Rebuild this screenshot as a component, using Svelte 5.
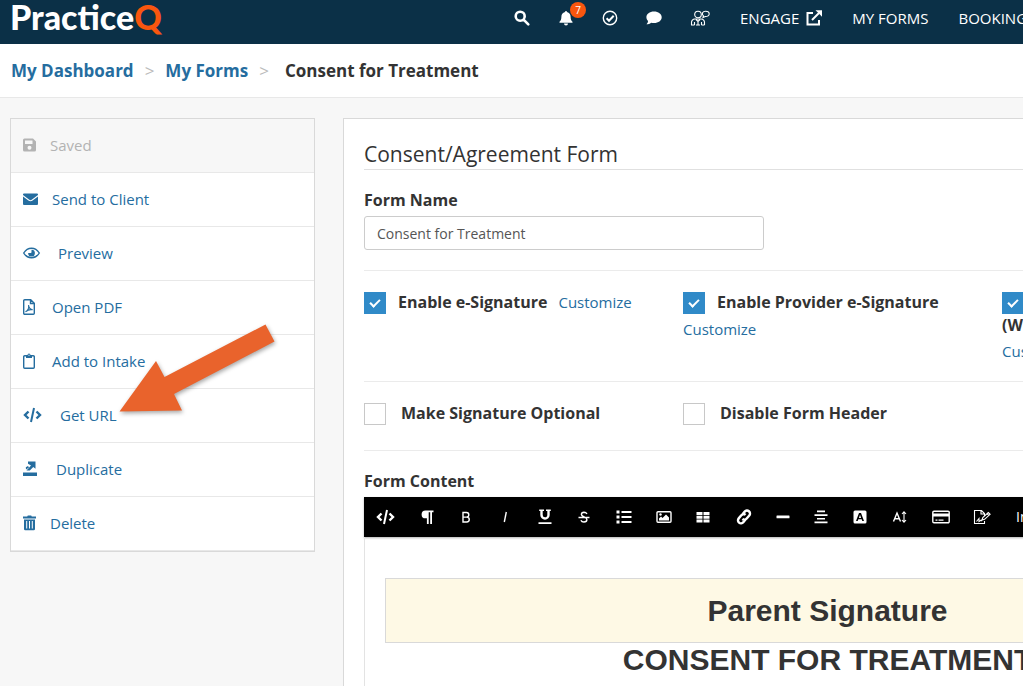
<script>

	let formName = $state("Consent for Treatment");

	// w is the width of the icon, it also decides where the text starts
	const actions = [
		{ icon: "save", w: 13, text: "Saved", disabled: true },
		{ icon: "mail", w: 15, text: "Send to Client" },
		{ icon: "eye", w: 21, text: "Preview" },
		{ icon: "pdf", w: 15, text: "Open PDF" },
		{ icon: "clipboard", w: 15, text: "Add to Intake" },
		{ icon: "code", w: 23, text: "Get URL" },
		{ icon: "duplicate", w: 19, text: "Duplicate" },
		{ icon: "trash", w: 13, text: "Delete" }
	];

	const tools = [
		{ icon: "code", w: 20, name: "HTML" },
		{ icon: "pilcrow", w: 18, name: "Format" },
		{ icon: "bold", w: 16, name: "Bold" },
		{ icon: "italic", w: 18, name: "Italic" },
		{ icon: "underline", w: 18, name: "Underline" },
		{ icon: "strike", w: 16, name: "Strikethrough" },
		{ icon: "list", w: 20, name: "Lists" },
		{ icon: "image", w: 16, name: "Image" },
		{ icon: "table", w: 18, name: "Table" },
		{ icon: "link", w: 20, name: "Link" },
		{ icon: "line", w: 14, name: "Horizontal line" },
		{ icon: "align", w: 18, name: "Alignment" },
		{ icon: "color", w: 16, name: "Font color" },
		{ icon: "size", w: 20, name: "Font size" },
		{ icon: "card", w: 18, name: "Card" },
		{ icon: "sign", w: 20, name: "Signature" }
	];

	const signatures = [
		{ id: "client", text: "Enable e-Signature" },
		{ id: "provider", text: "Enable Provider e-Signature" },
		{ id: "witness", text: "Enable Additional e-Signature (Witness)" }
	];

	const options = [
		{ id: "optional", text: "Make Signature Optional" },
		{ id: "header", text: "Disable Form Header" }
	];

</script>

{#snippet glyph(icon, w)}
	<svg class="icon" width={w} height="16" viewBox={`0 0 ${w} 16`} aria-hidden="true">
		{#if icon === "save"}
			<path fill-rule="evenodd" d="M1.500 1.500H10l3 3v8.500a1.500 1.500 0 0 1-1.500 1.500h-10A1.500 1.500 0 0 1 0 13V3A1.500 1.500 0 0 1 1.500 1.500zM2 3.500V7h7.500V3.500zM6.500 8.700a2 2 0 1 0 0 4 2 2 0 0 0 0-4z" />
		{:else if icon === "mail"}
			<path d="M1 2.500h13a1 1 0 0 1 1 1v.600L9 8.600q-1.500 1.100-3 0L0 4.100v-.600a1 1 0 0 1 1-1z" />
			<path d="M0 5.500l5.400 4q2.100 1.500 4.200 0l5.400-4V13a1 1 0 0 1-1 1H1a1 1 0 0 1-1-1z" />
		{:else if icon === "eye"}
			<path class="stroke" d="M.7 8Q3.700 3.200 8.500 3.200T16.300 8Q13.300 12.800 8.500 12.800T.7 8z" />
			<path d="M8.500 4.700a3.400 3.400 0 1 1-3.400 3.400h2.200a1.200 1.200 0 0 0 1.200-1.200z" />
		{:else if icon === "pdf"}
			<path class="stroke" d="M.7 1.700A1 1 0 0 1 1.700.7h6L11.300 4.300v10a1 1 0 0 1-1 1H1.700a1 1 0 0 1-1-1zM7.500.7v3.800h3.800" />
			<path class="thin" d="M2.500 12.800C5 11.500 6 8.500 5.500 6.200c.5 3 2 4.500 4.200 4.600-2.500-.6-5 .200-7.200 2z" />
		{:else if icon === "clipboard"}
			<path class="stroke" d="M3.500 2.700H1.700a1 1 0 0 0-1 1v10.500a1 1 0 0 0 1 1h8.600a1 1 0 0 0 1-1V3.700a1 1 0 0 0-1-1H8.500" />
			<path fill-rule="evenodd" d="M3 5V2h1.500a1.500 1.500 0 0 1 3 0H9v3zm3-3.400a.6.6 0 1 0 0 1.200.6.6 0 0 0 0-1.200z" />
		{:else if icon === "code"}
			<path class="bold" d="M5.500 4.500L2 8l3.500 3.500M13.500 4.500L17 8l-3.500 3.500" />
			<path class="thick" d="M11 1L8 15" />
		{:else if icon === "duplicate"}
			<path d="M0 11.500h14V15H0zM5 .5h7.500v7.200L10.300 5.900 6.800 9.400H3.500L8 4.500 5 2.800zM2.800 6.300L5 5l1 1.400-3 2z" />
		{:else if icon === "trash"}
			<path fill-rule="evenodd" d="M0 1.600h4.200L4.800.5h3.400l.6 1.100H13v1.800H0zM1 4.500h11V14a1.300 1.300 0 0 1-1.300 1.300H2.300A1.300 1.300 0 0 1 1 14zM3.200 6v7.500h1V6zm2.800 0v7.500h1V6zm2.800 0v7.500h1V6z" />
		{:else if icon === "pilcrow"}
			<path d="M15.500 1.500v1.800H14V15h-1.800V3.300h-1.500V15H8.900V9.300h-1.400a3.900 3.900 0 1 1 0-7.800z" />
		{:else if icon === "bold"}
			<path class="stroke" d="M5 3.500h3.500a2.200 2.200 0 0 1 0 4.600H5zM5 8.100h3.800a2.400 2.400 0 0 1 0 4.900H5z" />
		{:else if icon === "italic"}
			<path class="stroke" d="M10.300 3L8.300 13" />
		{:else if icon === "underline"}
			<path class="bold" d="M5.500 1.500V6a3.500 3.500 0 0 0 7 0V1.500" />
			<path d="M3.200.5h4.800v1.500H3.200zM10 .5h4.800v1.500H10zM2.500 13.300h13V15h-13z" />
		{:else if icon === "strike"}
			<path class="stroke" d="M11 5Q10 3.200 8 3.200 5.400 3.300 5.400 5.400c0 2.600 5.500 2.300 5.500 5.100 0 1.500-1.200 2.500-3 2.500q-2.200 0-3-1.800M2.500 8.500h11" />
		{:else if icon === "list"}
			<path d="M2.500 1.500h3v3h-3zM7.500 2h10v2h-10zM2.500 6.500h3v3h-3zM7.500 7h10v2h-10zM2.500 11.500h3v3h-3zM7.500 12h10v2h-10z" />
		{:else if icon === "image"}
			<path class="stroke" d="M2 2.700h12a1 1 0 0 1 1 1v8.600a1 1 0 0 1-1 1H2a1 1 0 0 1-1-1V3.700a1 1 0 0 1 1-1z" />
			<path d="M3 11.500V9.600l2-2L6.500 9 10 5.500l3 3v3z" />
			<circle cx="4.500" cy="5.500" r="1.200" />
		{:else if icon === "table"}
			<path d="M2.500 3h6v3h-6zM9.500 3h6v3h-6zM2.500 6.800h6v3h-6zM9.500 6.800h6v3h-6zM2.500 10.600h6v3h-6zM9.500 10.600h6v3h-6z" />
		{:else if icon === "link"}
			<path class="bold" d="M8.500 5.200l2.200-2.600a3 3 0 0 1 4.600 3.900l-2.600 3.100a3 3 0 0 1-4.300.4M11.500 10.600l-2.200 2.700a3 3 0 0 1-4.600-3.900l2.600-3.100a3 3 0 0 1 4.300-.4" />
		{:else if icon === "line"}
			<path d="M1 6.500h12a.5.5 0 0 1 .5.5v1.800a.5.5 0 0 1-.5.500H1a.5.5 0 0 1-.5-.5V7a.5.5 0 0 1 .5-.5z" />
		{:else if icon === "align"}
			<path d="M5 1.500h8v1.700H5zM2.500 5.200h13v1.700h-13zM5 8.900h8v1.700H5zM2.500 12.600h13v1.700h-13z" />
		{:else if icon === "color"}
			<path fill-rule="evenodd" d="M3 1.500h10a1.500 1.500 0 0 1 1.500 1.500v10a1.500 1.500 0 0 1-1.500 1.500H3A1.500 1.500 0 0 1 1.500 13V3A1.500 1.500 0 0 1 3 1.500zM7 4l-3 8h1.700l.6-1.700h3.400l.6 1.700H12L9 4zm1 1.700l1.100 3.200H6.900z" />
		{:else if icon === "size"}
			<path class="stroke" d="M3.500 12.500L7 4l3.500 8.500M4.700 9.800h4.600" />
			<path class="thin" d="M14 3v10M12 5l2-2.200L16 5M12 11l2 2.200L16 11" />
		{:else if icon === "card"}
			<path class="stroke" d="M2 2.200h14a1.200 1.200 0 0 1 1.200 1.200v9.200a1.200 1.200 0 0 1-1.200 1.200H2A1.200 1.200 0 0 1 .8 12.600V3.400A1.200 1.200 0 0 1 2 2.200z" />
			<path d="M1 4.500h16v3H1zM3.500 10.500h2v1.200h-2zM6.500 10.500h5v1.200h-5z" />
		{:else if icon === "sign"}
			<path class="thin" d="M12.500 12v2.500H2.500v-13h7l3 3v2M9 1.500v3.500h3.500M4.500 12.500l2.500-3v3l2-1.300 1 1M10 11l.8-2.500 5.500-5 1.800 1.800-5.500 5zM15 4.700l1.800 1.800" />
		{/if}
	</svg>
{/snippet}

<div class="page">

	<header>
		<a class="logo" href="#home">Practice<span>Q</span></a>

		<nav>
			<button aria-label="Search">
				<svg class="icon" width="16" height="16" viewBox="0 0 16 16">
					<path class="search" d="M10.700 6.200a4.500 4.500 0 1 1-9 0 4.500 4.500 0 0 1 9 0zM9.600 9.600l4.700 4.700" />
				</svg>
			</button>
			<button class="bell" aria-label="Notifications">
				<svg class="icon" width="16" height="16" viewBox="0 0 16 16">
					<path d="M8 1a1 1 0 0 1 1 1c2.400.6 3.600 2.400 3.600 4.800 0 2.700.8 4 1.900 4.900v1H1.500v-1c1.100-.9 1.900-2.200 1.900-4.900C3.400 4.400 4.600 2.600 7 2a1 1 0 0 1 1-1zM6 13.500h4a2 2 0 0 1-4 0z" />
				</svg>
				<span class="badge">7</span>
			</button>
			<button aria-label="Tasks">
				<svg class="icon" width="16" height="16" viewBox="0 0 16 16">
					<circle class="stroke" cx="8" cy="8" r="6.700" />
					<path class="thick" d="M4.600 8.300l2.400 2.400 4.700-4.900" />
				</svg>
			</button>
			<button aria-label="Messages">
				<svg class="icon" width="16" height="16" viewBox="0 0 16 16">
					<path d="M8 1.500c4.400 0 7.700 2.500 7.700 5.800s-3.300 5.800-7.700 5.800c-1 0-2-.1-2.800-.4C3.800 13.800 2.300 14.300.5 14.300c1-1 1.500-2.100 1.600-3.200C1 10.100.4 8.800.4 7.300.4 4 3.600 1.500 8 1.500z" />
				</svg>
			</button>
			<button aria-label="Clients">
				<svg class="icon" width="20" height="16" viewBox="0 0 20 16">
					<circle class="thin" cx="8" cy="4.500" r="3.300" />
					<path class="thin" d="M1.500 15v-2.500A3.300 3.300 0 0 1 4.800 9h6.400a3.300 3.300 0 0 1 3.300 3.500V15M4.500 15v-3M11.500 15v-3M6 9.500l2 2 2-2M8 11.500V15M1 15h3.500M6 15h4M11.500 15h3" />
					<path class="thin" d="M13 7.500l.4-1.600c-2.200-2-.8-4.600 2.200-4.600 2.200 0 3.600 1.200 3.600 2.700s-1.600 2.600-3.900 2.500z" />
				</svg>
			</button>
			<a href="#engage">ENGAGE
				<svg class="icon" width="16" height="16" viewBox="0 0 16 16" aria-hidden="true">
					<path class="ext" d="M7 3H1.500v11.500H13V10" />
					<path class="ext" d="M6 10l7-7" />
					<path d="M9.500.300H16v6.500l-2.200-2.200-2-2z" />
				</svg>
			</a>
			<a href="#forms">MY FORMS</a>
			<a href="#booking">BOOKING</a>
		</nav>
	</header>

	<div class="breadcrumb">
		<a href="#dashboard">My Dashboard</a>
		<span class="sep">&gt;</span>
		<a href="#forms">My Forms</a>
		<span class="sep">&gt;</span>
		<span class="current">Consent for Treatment</span>
	</div>

	<div class="content">

		<aside>
			{#each actions as action}
				<button class="action" disabled={action.disabled}>
					{@render glyph(action.icon, action.w)}
					{action.text}
				</button>
			{/each}

			<svg class="arrow" width="156" height="88" viewBox="119 324 156 88" aria-hidden="true">
				<path d="M119.500 411.500L156 361l8.500 16 101-52.500 9 17L174 394l8 16.500z" />
			</svg>
		</aside>

		<main>
			<h1>Consent/Agreement Form</h1>

			<label class="title" for="form-name">Form Name</label>
			<input id="form-name" type="text" bind:value={formName} />

			<div class="row signatures">
				{#each signatures as s}
					<div class="col">
						<label for={s.id}><input id={s.id} type="checkbox" checked />{s.text}</label>
						<a href="#customize">Customize</a>
					</div>
				{/each}
			</div>

			<div class="row options">
				{#each options as o}
					<div class="col">
						<label for={o.id}><input id={o.id} type="checkbox" />{o.text}</label>
					</div>
				{/each}
			</div>

			<div class="form-content">
				<h2 class="title">Form Content</h2>

				<div class="toolbar">
					{#each tools as tool}
						<button aria-label={tool.name}>{@render glyph(tool.icon, tool.w)}</button>
					{/each}
					<button class="insert">Insert</button>
				</div>

				<div class="editor">
					<div class="signature">Parent Signature</div>
					<div class="heading">CONSENT FOR TREATMENT</div>
				</div>
			</div>
		</main>

	</div>

</div>

<style>

	:global(body) {
		overflow: hidden;
		background: #f7f7f7;
		color: #333;
		font-family: "Open Sans", sans-serif;
		font-size: 15px;
		line-height: 22px;
	}

	.page {
		min-width: 1322px;
		min-height: 100vh;
		display: flex;
		flex-direction: column;
	}

	a {
		color: #256d9f;
		text-decoration: none;
	}

	button {
		font: inherit;
		border: 0;
		padding: 0;
		background: none;
		color: inherit;
		cursor: pointer;
	}

	.icon {
		display: block;
		flex: none;
		fill: currentColor;
		overflow: visible;
	}

	.icon .stroke, .icon .thick, .icon .thin, .icon .bold, .icon .search, .icon .ext {
		fill: none;
		stroke: currentColor;
		stroke-width: 1.4;
	}

	.icon .thick {
		stroke-width: 2;
	}

	.icon .bold {
		stroke-width: 2.4;
	}

	.icon .thin {
		stroke-width: 1.1;
	}

	.icon .search {
		stroke-width: 2.6;
		stroke-linecap: round;
	}

	.icon .ext {
		stroke-width: 2;
	}

	header {
		display: flex;
		height: 44px;
		padding-left: 10px;
		background: #0b3047;
		color: #fff;
	}

	.logo {
		width: 504px;
		color: #fff;
		font-family: Lato, sans-serif;
		font-size: 34px;
		font-weight: 900;
		line-height: 34px;
	}

	.logo span {
		color: #f9560f;
	}

	nav {
		display: flex;
		align-items: center;
		gap: 28px;
		height: 36px;
	}

	nav a {
		display: flex;
		align-items: center;
		gap: 7px;
		margin-left: 2px;
		color: #fff;
	}

	.bell {
		position: relative;
	}

	.badge {
		position: absolute;
		top: -8px;
		left: 12px;
		width: 16px;
		height: 16px;
		border-radius: 50%;
		background: #f9560f;
		font-size: 10px;
		line-height: 16px;
		text-align: center;
	}

	.breadcrumb {
		display: flex;
		align-items: center;
		height: 53px;
		padding-left: 11px;
		background: #fff;
		border-bottom: 1px solid #e8e8e8;
		font-size: 17px;
		font-weight: bold;
	}

	.sep {
		margin: 0 11px;
		color: #bbb;
		font-weight: normal;
	}

	.current {
		margin-left: 5px;
	}

	.content {
		flex: 1;
		display: flex;
		gap: 28px;
		padding: 20px 10px 0;
	}

	aside {
		position: relative;
		flex: none;
		width: 303px;
		align-self: flex-start;
		border: 1px solid #d9d9d9;
		background: #fff;
	}

	.action {
		display: flex;
		align-items: center;
		gap: 14px;
		width: 100%;
		height: 54px;
		padding: 0 12px 2px;
		border-bottom: 1px solid #e8e8e8;
		color: #256d9f;
		text-align: left;
	}

	.action:disabled {
		background: #f7f7f7;
		color: #b3b3b3;
	}

	.arrow {
		position: absolute;
		top: 205px;
		left: 108px;
		fill: #e9632c;
		overflow: visible;
		filter: drop-shadow(1px 2px 2px rgba(0, 0, 0, 0.35));
	}

	main {
		flex: 1;
		display: flex;
		flex-direction: column;
		padding: 20px 20px 0;
		border: 1px solid #d9d9d9;
		border-bottom: 0;
		background: #fff;
	}

	h1 {
		margin: 0 0 19px;
		border-bottom: 1px solid #e0e0e0;
		font-size: 21px;
		font-weight: normal;
		line-height: 30px;
	}

	.title, .col label {
		margin: 0;
		font-size: 16px;
		font-weight: bold;
	}

	input[type=text] {
		box-sizing: border-box;
		width: 400px;
		height: 34px;
		margin: 5px 0 20px;
		padding: 0 12px;
		border: 1px solid #ccc;
		border-radius: 3px;
		background: #fff;
		color: #555;
		font: inherit;
		font-size: 14px;
	}

	.row {
		display: grid;
		grid-template-columns: repeat(3, 1fr);
		gap: 30px;
		border-top: 1px solid #ebebeb;
	}

	.signatures {
		padding: 20px 0 19px;
	}

	.options {
		padding: 20px 0 25px;
		border-bottom: 1px solid #ebebeb;
	}

	.col {
		display: flex;
		flex-wrap: wrap;
		align-content: flex-start;
		gap: 4px 11px;
	}

	input[type=checkbox] {
		appearance: none;
		width: 22px;
		height: 22px;
		margin: 1px 12px 0 0;
		border: 1px solid #c8c8c8;
		background: #fff;
		vertical-align: top;
	}

	.options input[type=checkbox] {
		margin-right: 15px;
	}

	input[type=checkbox]:checked {
		display: inline-grid;
		place-items: center;
		border-color: #308ac8;
		background: #308ac8;
	}

	input[type=checkbox]:checked::before {
		content: "";
		width: 8px;
		height: 4px;
		margin-bottom: 3px;
		border: solid #fff;
		border-width: 0 0 2px 2px;
		transform: rotate(-45deg);
	}

	.form-content {
		flex: 1;
		display: flex;
		flex-direction: column;
		padding-top: 19px;
	}

	.toolbar {
		display: flex;
		height: 40px;
		margin-top: 5px;
		padding-left: 1px;
		background: #000;
		color: #fff;
		box-shadow: 0 1px 2px rgba(0, 0, 0, 0.3);
	}

	.toolbar button {
		padding: 0 11px;
	}

	.toolbar .insert {
		padding-left: 13px;
		font-size: 14px;
	}

	.editor {
		flex: 1;
		padding: 41px 20px 0;
		border: solid #e3e3e3;
		border-width: 0 1px;
		font-family: "Liberation Sans", sans-serif;
		font-size: 30px;
		font-weight: bold;
		line-height: 33px;
		text-align: center;
	}

	.signature {
		padding: 15px 0;
		border: 1px solid #d9d9d9;
		background: #fef9e5;
	}

</style>
